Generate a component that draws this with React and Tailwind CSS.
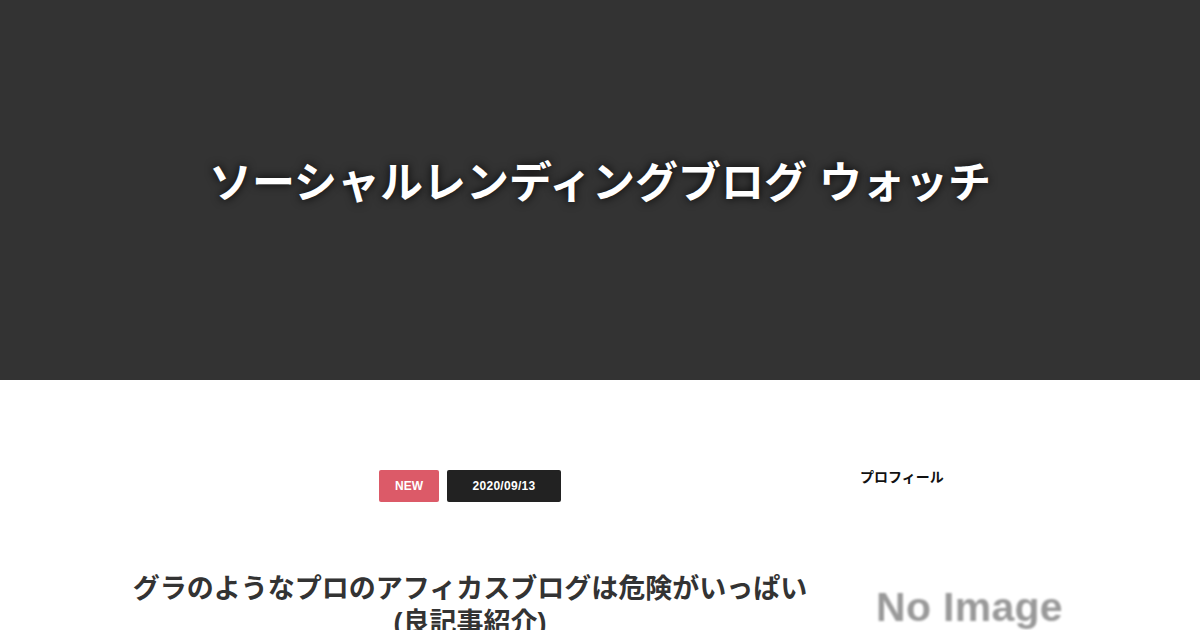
export default function App() {
  const jp = { fontFamily: '"Liberation Sans", "Noto Sans CJK JP", sans-serif' };
  return (
    <div className="w-[1200px] h-[630px] overflow-hidden bg-white" style={jp}>
      <header className="h-[380px] bg-[#333333] flex items-center justify-center">
        <h1 className="text-white text-[43px] font-bold leading-none mt-[-14px] [text-shadow:0_0_10px_rgba(0,0,0,0.9)]">
          ソーシャルレンディングブログ ウォッチ
        </h1>
      </header>
      <div className="flex pl-[110px] pt-[90px]">
        <main className="w-[720px] flex flex-col items-center">
          <div className="flex gap-2">
            <span className="w-[60px] h-[32px] rounded-[2px] bg-[#dc5a68] text-white text-[12px] font-bold flex items-center justify-center">NEW</span>
            <span className="w-[114px] h-[32px] rounded-[2px] bg-[#222222] text-white text-[12px] font-bold flex items-center justify-center tracking-[0.3px]">2020/09/13</span>
          </div>
          <h2 className="mt-[70px] text-[27px] font-bold text-[#333333] leading-[34px] text-center">
            グラのようなプロのアフィカスブログは危険がいっぱい<br />(良記事紹介)
          </h2>
        </main>
        <aside className="ml-[30px] w-[220px]">
          <div className="text-[14px] font-bold text-[#111] mt-[-3px]">プロフィール</div>
          <div className="mt-[99px] ml-[16px] text-[41px] font-black text-[#999999] leading-none tracking-[0.3px] [filter:blur(1.2px)]" style={{ fontFamily: '"Liberation Sans", Arial, sans-serif' }}>
            No Image
          </div>
        </aside>
      </div>
    </div>
  );
}
